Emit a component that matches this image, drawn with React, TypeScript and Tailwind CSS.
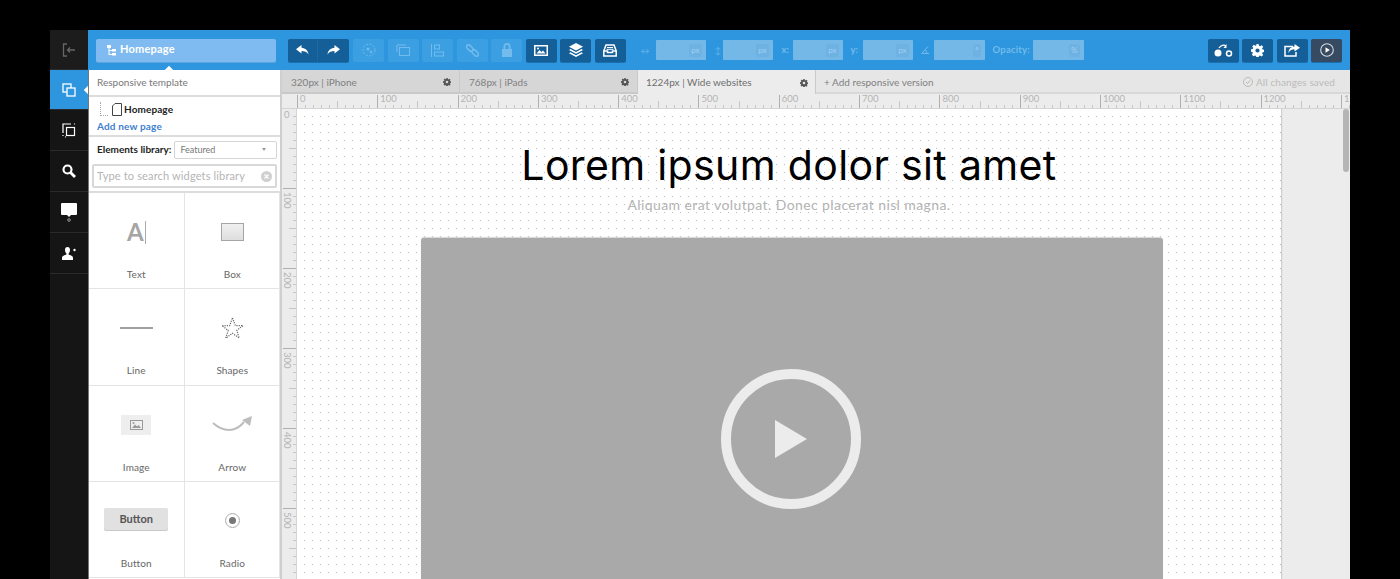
import { ReactNode } from "react";

const sans = "font-['Lato','Liberation_Sans',sans-serif]";

const hTicks = Array.from({ length: 134 }, (_, i) => i);
const hLabels = [0, 100, 200, 300, 400, 500, 600, 700, 800, 900, 1000, 1100, 1200, 1300];
const vTicks = Array.from({ length: 60 }, (_, i) => i);

function HorizontalRuler() {
  return (
    <svg width="1068" height="14" className="block">
      {hTicks.map((i) => {
        const x = 15.5 + Math.round(i * 8.03);
        const major = i % 10 === 0;
        const mid = i % 5 === 0;
        return <line key={i} x1={x} x2={x} y1={major ? 1 : mid ? 7 : 11} y2={14} stroke={major ? "#b0b0b0" : "#c6c6c6"} />;
      })}
      {hLabels.map((n, i) => (
        <text key={n} x={18 + i * 80.3} y={8} fontSize="9.5" fill="#b4b4b4" fontFamily="Lato">
          {n === 1300 ? "13" : n}
        </text>
      ))}
    </svg>
  );
}

function VerticalRuler() {
  return (
    <svg width="14" height="480" className="block">
      {vTicks.map((i) => {
        const y = i * 8 - 0.5;
        const major = i % 10 === 0;
        const mid = i % 5 === 0;
        return <line key={i} x1={major ? 1 : mid ? 7 : 11} x2={14} y1={y} y2={y} stroke={major ? "#b0b0b0" : "#c6c6c6"} />;
      })}
      <text x={2} y={9} fontSize="9.5" fill="#b4b4b4" fontFamily="Lato">0</text>
      {[100, 200, 300, 400, 500].map((n, i) => (
        <text key={n} transform={`translate(2 ${83 + i * 80}) rotate(90)`} fontSize="9.5" fill="#b4b4b4" fontFamily="Lato">
          {n}
        </text>
      ))}
    </svg>
  );
}

function Gear({ size = 8, color = "#555" }: { size?: number; color?: string }) {
  return (
    <svg width={size} height={size} viewBox="0 0 16 16">
      <path fill={color} fillRule="evenodd" d="M6.6 0h2.8l.4 2.2 1.3.6L13 1.5l2 2-1.300 1.900.6 1.300 2.200.4v2.800l-2.200.4-.6 1.300 1.300 1.900-2 2-1.900-1.300-1.300.6-.4 2.200H6.600l-.4-2.200-1.300-.6L3 15l-2-2 1.300-1.900-.6-1.300L0 9.400V6.600l2.200-.4.6-1.300L1.500 3l2-2 1.900 1.300 1.300-.6zM8 5.400a2.600 2.600 0 1 0 0 5.200 2.600 2.600 0 0 0 0-5.200z" />
    </svg>
  );
}

function ToolButton({ tone, children }: { tone: "dark" | "faint" | "slate"; children: ReactNode }) {
  const toneClass =
    tone === "dark"
      ? "bg-[#155f98] shadow-[0_1px_0_#1a6fae]"
      : tone === "slate"
        ? "bg-[#364a62] shadow-[0_1px_0_#1a6fae]"
        : "bg-[#3b9fe2]";
  return <div className={`flex h-[23px] w-[31px] items-center justify-center rounded-[2px] ${toneClass}`}>{children}</div>;
}

function SizeInput({ unit, width = "w-[50px]" }: { unit: string; width?: string }) {
  return (
    <div className={`flex h-[20px] ${width} items-center justify-end rounded-[1px] bg-[#74b8e8] pr-[4px]`}>
      <span className="flex h-[13px] min-w-[5px] items-center rounded-[2px] bg-[#6eb2e4] px-[2px] text-[8px] text-[#9fd0f2]">{unit}</span>
    </div>
  );
}

function RailItem({ active, children }: { active?: boolean; children: ReactNode }) {
  return (
    <div className={`relative flex items-center justify-center border-b border-[#2a2a2a] first:h-[40px] first:bg-[#1c1c1c] ${active ? "h-[40px] bg-[#2d96de]" : "h-[41px]"}`}>
      {children}
      {active && <div className="absolute right-[-3px] top-[17px] h-[6px] w-[6px] rotate-45 bg-white" />}
    </div>
  );
}

function WidgetCell({ label, children }: { label: string; children: ReactNode }) {
  return (
    <div className="flex h-[96.330px] flex-col items-center border-b border-r border-[#e4e4e4] even:pl-[1px]">
      <div className="flex h-[78px] w-full items-center justify-center">{children}</div>
      <span className="mt-[-3px] text-[10px] leading-[12px] tracking-[0.1px] text-[#666]">{label}</span>
    </div>
  );
}

const faintIcon = "#72bbec";

export default function App() {
  return (
    <div className={`h-screen overflow-hidden bg-black px-[50px] pt-[30px] ${sans}`}>
      <div className="flex h-full">
        {/* left rail */}
        <div className="w-[38px] shrink-0 bg-[#151515]">
          <RailItem>
            <svg width="14" height="14" viewBox="0 0 14 14" fill="none" stroke="#666" strokeWidth="1.300">
              <path d="M5 1H1.500v12H5" />
              <path d="M13 7H5.500M8 4.500 5.500 7 8 9.500" />
            </svg>
          </RailItem>
          <RailItem active>
            <svg width="14" height="14" viewBox="0 0 14 14" fill="none" stroke="#fff" strokeWidth="1.300">
              <rect x="1" y="1" width="8" height="8" />
              <rect x="5" y="5" width="8" height="8" fill="#2d96de" />
            </svg>
          </RailItem>
          <RailItem>
            <svg width="15" height="15" viewBox="0 0 15 15" fill="none" stroke="#fff" strokeWidth="1.200">
              <path d="M1 10V1h8" />
              <rect x="4.500" y="4.500" width="8" height="8" />
              <path d="M1 12v2M3 14h1M12 1h1" strokeDasharray="1 1" />
            </svg>
          </RailItem>
          <RailItem>
            <svg width="14" height="14" viewBox="0 0 14 14" fill="none" stroke="#fff" strokeWidth="2.200">
              <circle cx="5.500" cy="5.500" r="4" />
              <path d="M8.500 8.500 13 13" strokeWidth="2.800" />
            </svg>
          </RailItem>
          <RailItem>
            <svg width="16" height="19" viewBox="0 0 16 19">
              <path fill="#fff" d="M1 0h14a1 1 0 0 1 1 1v10a1 1 0 0 1-1 1h-5l-2 2-2-2H1a1 1 0 0 1-1-1V1a1 1 0 0 1 1-1z" />
              <circle cx="8" cy="17" r="1.300" fill="none" stroke="#999" />
            </svg>
          </RailItem>
          <RailItem>
            <svg width="14" height="13" viewBox="0 0 14 13">
              <path fill="#fff" d="M5.500 0C3.800 0 3 1.300 3 3c0 1.500.6 2.800 1.400 3.400v1.200C2.500 8.300 0 9 0 10.500V13h11v-2.500C11 9 8.500 8.300 6.600 7.600V6.400C7.400 5.800 8 4.500 8 3c0-1.700-.8-3-2.500-3z" />
              <circle cx="12.500" cy="3" r="1.200" fill="#fff" />
            </svg>
          </RailItem>
        </div>

        <div className="flex min-w-0 flex-1 flex-col">
          {/* toolbar */}
          <div className="flex h-[40px] shrink-0 items-center bg-[#2d96de] pl-[8px] pr-[8px]">
            <div className="flex h-[23px] w-[180px] items-center gap-[4px] rounded-[2px] bg-[#7fbbf0] pl-[11px] shadow-[0_1px_0_#5aa5dd]">
              <svg width="9" height="11" viewBox="0 0 9 11" fill="#fff">
                <rect x="0" y="0" width="4" height="3" />
                <rect x="5" y="4" width="4" height="2.500" />
                <rect x="5" y="8" width="4" height="2.500" />
                <path d="M1.500 3h1v6H5v1H1.500zM2.500 5H5v1H2.500z" />
              </svg>
              <span className="pb-[2px] text-[11px] font-bold tracking-[0.2px] text-white">Homepage</span>
            </div>

            <div className="ml-[12px] flex h-[23px] w-[61px] rounded-[2px] bg-[#155f98] shadow-[0_1px_0_#1a6fae]">
              <div className="flex w-[30px] items-center justify-center border-r border-[#1a6aa8]">
                <svg width="13" height="10" viewBox="0 0 13 10" fill="#fff">
                  <path d="M5.500 0 0 4.300l5.500 4.300V6c3 0 5.500.8 7 3.500C12 5.500 9.500 3 5.500 2.700z" />
                </svg>
              </div>
              <div className="flex flex-1 items-center justify-center">
                <svg width="13" height="10" viewBox="0 0 13 10" fill="#fff">
                  <path d="M7.500 0 13 4.300 7.500 8.600V6c-3 0-5.500.8-7 3.500C1 5.500 3.500 3 7.500 2.700z" />
                </svg>
              </div>
            </div>

            <div className="ml-[4px] flex gap-[3.500px]">
              <ToolButton tone="faint">
                <svg width="14" height="14" viewBox="0 0 14 14" fill="none" stroke={faintIcon}>
                  <circle cx="7" cy="7" r="6" strokeDasharray="2 1.500" />
                  <circle cx="6" cy="6" r="1.500" fill={faintIcon} stroke="none" />
                  <circle cx="9" cy="9" r="1.200" fill={faintIcon} stroke="none" />
                </svg>
              </ToolButton>
              <ToolButton tone="faint">
                <svg width="14" height="12" viewBox="0 0 14 12" fill="none" stroke={faintIcon}>
                  <path d="M1 8V1h9" />
                  <rect x="3.500" y="3.500" width="10" height="8" />
                </svg>
              </ToolButton>
              <ToolButton tone="faint">
                <svg width="13" height="13" viewBox="0 0 13 13" fill="none" stroke={faintIcon}>
                  <path d="M.500 0v13" />
                  <rect x="3.500" y="1" width="5" height="4" />
                  <rect x="3.500" y="8" width="9" height="4" />
                </svg>
              </ToolButton>
              <ToolButton tone="faint">
                <svg width="13" height="13" viewBox="0 0 13 13" fill="none" stroke={faintIcon} strokeWidth="1.500">
                  <rect x="0" y="2" width="7.500" height="4" rx="2" transform="rotate(45 3.750 4)" />
                  <rect x="5.500" y="7" width="7.500" height="4" rx="2" transform="rotate(45 9.250 9)" />
                </svg>
              </ToolButton>
              <ToolButton tone="faint">
                <svg width="12" height="14" viewBox="0 0 12 14" fill={faintIcon}>
                  <path fillRule="evenodd" d="M6 0a3.500 3.500 0 0 1 3.500 3.500V6H11v8H1V6h1.500V3.500A3.500 3.500 0 0 1 6 0zm0 1.800A1.700 1.700 0 0 0 4.300 3.500V6h3.400V3.500A1.700 1.700 0 0 0 6 1.800z" />
                </svg>
              </ToolButton>
              <ToolButton tone="dark">
                <svg width="14" height="11" viewBox="0 0 14 11">
                  <rect x="0.750" y="0.750" width="12.500" height="9.500" fill="none" stroke="#fff" strokeWidth="1.500" />
                  <path fill="#fff" d="M2.500 8.500 5.500 5l2 2 1.500-1.500 2.500 3z" />
                  <circle cx="4" cy="3.500" r="1" fill="#fff" />
                </svg>
              </ToolButton>
              <ToolButton tone="dark">
                <svg width="14" height="14" viewBox="0 0 14 14" fill="#fff">
                  <path d="M7 0l7 3.800L7 7.600 0 3.800z" />
                  <path d="M1.500 6 7 9l5.500-3L14 7l-7 3.800L0 7z" />
                  <path d="M1.500 9.200 7 12.200l5.500-3L14 10.200 7 14 0 10.200z" />
                </svg>
              </ToolButton>
              <ToolButton tone="dark">
                <svg width="14" height="13" viewBox="0 0 14 13" fill="none" stroke="#fff" strokeWidth="1.500">
                  <path d="M3 1h8l2.200 6v5H.800V7z" />
                  <path d="M1 7h3.500v1.500h5V7H13" />
                  <path d="M4 3.500h6M3.500 5.300h7" strokeWidth="1" />
                </svg>
              </ToolButton>
            </div>

            <span className="ml-[15px] w-[15px] text-[9px] leading-none text-[#64b2ea]">↔</span>
            <SizeInput unit="px" />
            <span className="ml-[9px] w-[8px] text-[9px] leading-none text-[#64b2ea]">↕</span>
            <SizeInput unit="px" />
            <span className="ml-[9px] w-[11px] text-[9.500px] font-bold text-[#72bbec]">x:</span>
            <SizeInput unit="px" />
            <span className="ml-[8px] w-[12px] text-[9.500px] font-bold text-[#72bbec]">y:</span>
            <SizeInput unit="px" />
            <svg className="ml-[8px] mr-[5px]" width="8" height="8" viewBox="0 0 8 8" fill="none" stroke="#72bbec">
              <path d="M7 .500 .700 7.500H8M4.500 3.500 6 7" />
            </svg>
            <SizeInput unit="°" width="w-[51px]" />
            <span className="ml-[8px] w-[40px] text-[9.500px] font-bold tracking-[0.2px] text-[#72bbec]">Opacity:</span>
            <SizeInput unit="%" width="w-[51px]" />

            <div className="ml-auto flex gap-[3.500px]">
              <ToolButton tone="dark">
                <svg width="19" height="13" viewBox="0 0 19 13" fill="none">
                  <circle cx="4" cy="9" r="3.500" fill="#fff" />
                  <circle cx="15" cy="9.500" r="2.500" stroke="#fff" strokeWidth="1.500" />
                  <path d="M5 4c2-3 5-3.500 7-2" stroke="#fff" strokeWidth="1.300" />
                  <path d="M12.500 0v4H9.500z" fill="#fff" />
                </svg>
              </ToolButton>
              <ToolButton tone="dark">
                <Gear size={13} color="#fff" />
              </ToolButton>
              <ToolButton tone="dark">
                <svg width="16" height="13" viewBox="0 0 16 13" fill="none">
                  <path d="M9 2.500H1v9.500h11V8" stroke="#fff" strokeWidth="1.500" />
                  <path fill="#fff" d="M10.500 0 16 3.800l-5.500 3.800V5.300C8 5.300 6 6 4.500 9c0-4 2.500-6.200 6-6.500z" />
                </svg>
              </ToolButton>
              <ToolButton tone="slate">
                <svg width="14" height="14" viewBox="0 0 14 14">
                  <circle cx="7" cy="7" r="6.300" fill="none" stroke="#d7dde4" strokeWidth="1.100" />
                  <path fill="#fff" d="M5.500 4.300 9.800 7l-4.300 2.700z" />
                </svg>
              </ToolButton>
            </div>
          </div>

          <div className="flex min-h-0 flex-1">
            {/* sidebar */}
            <div className="relative w-[194px] shrink-0 border-l border-r-2 border-l-[#777] border-r-[#cfcfcf] bg-white">
              <div className="absolute left-[77px] top-[-3px] h-[6px] w-[6px] rotate-45 bg-white" />
              <div className="flex h-[27px] items-center border-b-2 border-[#dcdcdc] pl-[8px] text-[10px] text-[#777]">
                Responsive template
              </div>
              <div className="relative h-[40px] border-b-2 border-[#dcdcdc] pl-[8px]">
                <div className="flex h-[24px] items-center pl-[3px]">
                  <div className="mr-[4px] h-[14px] w-[8px] border-b border-l border-dotted border-[#aaa]" />
                  <svg width="10" height="13" viewBox="0 0 10 13" fill="none" stroke="#444">
                    <path d="M3 .500h6.500v12H.500V3z" />
                  </svg>
                  <span className="ml-[2px] text-[10px] font-bold tracking-[0.1px] text-[#222]">Homepage</span>
                </div>
                <div className="mt-[-1px] text-[10px] font-bold leading-[12px] tracking-[0.15px] text-[#3f7fd0]">Add new page</div>
              </div>
              <div className="flex h-[27px] items-center pb-[2px] pl-[8px]">
                <span className="shrink-0 whitespace-nowrap text-[10px] font-bold text-[#222]">Elements library:</span>
                <div className="ml-[3px] flex h-[18px] w-[103px] shrink-0 items-center justify-between rounded-[2px] border border-[#d5d5d5] pl-[5px] pr-[10px] text-[9px] text-[#777]">
                  Featured
                  <span className="h-0 w-0 border-x-[2.500px] border-t-[3px] border-x-transparent border-t-[#999]" />
                </div>
              </div>
              <div className="border-b-2 border-[#dcdcdc] px-[3px] pb-[3px]">
                <div className="flex h-[24px] items-center justify-between rounded-[2px] border-2 border-[#d8d8d8] pl-[3px] pr-[3px] text-[11px] tracking-[0.15px] text-[#b4b4b4]">
                  Type to search widgets library
                  <span className="flex h-[11px] w-[11px] items-center justify-center rounded-full bg-[#cfcfcf]">
                    <svg width="5" height="5" viewBox="0 0 5 5" stroke="#fff" strokeWidth="1.200"><path d="M.500.500l4 4M4.500.500l-4 4" /></svg>
                  </span>
                </div>
              </div>
              <div className="grid grid-cols-2">
                <WidgetCell label="Text">
                  <div className="flex items-center">
                    <span className="text-[24px] font-bold leading-none text-[#a5a5a5]">A</span>
                    <span className="ml-[1px] h-[23px] w-px bg-[#aaa]" />
                  </div>
                </WidgetCell>
                <WidgetCell label="Box">
                  <div className="h-[18px] w-[23px] border border-[#a5a5a5] bg-gradient-to-b from-[#f0f0f0] to-[#dedede]" />
                </WidgetCell>
                <WidgetCell label="Line">
                  <div className="h-[2px] w-[33px] bg-[#a0a0a0]" />
                </WidgetCell>
                <WidgetCell label="Shapes">
                  <svg width="23" height="23" viewBox="0 0 24 24" fill="none" stroke="#666" strokeWidth="1.300" strokeDasharray="1.200 1.200">
                    <path d="M12 1l3 8h8l-6.500 5 2.500 8-7-5-7 5 2.500-8L1 9h8z" />
                  </svg>
                </WidgetCell>
                <WidgetCell label="Image">
                  <div className="flex h-[20px] w-[30px] items-center justify-center bg-[#eee]">
                    <svg width="13" height="10" viewBox="0 0 13 10">
                      <rect x=".500" y=".500" width="12" height="9" fill="none" stroke="#999" />
                      <path fill="#999" d="M2 8l3-3.500 2 2 1.500-1.500L11 8z" />
                      <circle cx="3.500" cy="3" r="1" fill="#999" />
                    </svg>
                  </div>
                </WidgetCell>
                <WidgetCell label="Arrow">
                  <svg width="41" height="20" viewBox="0 0 41 20" fill="none">
                    <path d="M1 8c10 9 22 10 31-1" stroke="#bdbdbd" strokeWidth="2" />
                    <path fill="#bdbdbd" d="M40 1l-2 10-8-6z" />
                  </svg>
                </WidgetCell>
                <WidgetCell label="Button">
                  <div className="mb-[3px] flex h-[22px] w-[64px] items-center justify-center rounded-[2px] bg-[#e1e1e1] text-[11px] font-bold text-[#555] shadow-[0_1px_0_#c8c8c8]">
                    Button
                  </div>
                </WidgetCell>
                <WidgetCell label="Radio">
                  <div className="flex h-[15px] w-[15px] items-center justify-center rounded-full border border-[#aaa]">
                    <div className="h-[7px] w-[7px] rounded-full bg-[#777]" />
                  </div>
                </WidgetCell>
              </div>
            </div>

            {/* workspace */}
            <div className="flex min-w-0 flex-1 flex-col">
              <div className="flex h-[24px] shrink-0 text-[10px] text-[#808080]">
                <div className="flex w-[178px] items-center justify-between border-b-2 border-r border-[#c9c9c9] bg-[#d6d6d6] pl-[9px] pr-[8px] pt-[2px]">
                  <span>320px |&nbsp;iPhone</span> <Gear />
                </div>
                <div className="flex w-[178px] items-center justify-between border-b-2 border-r border-[#c9c9c9] bg-[#d6d6d6] pl-[9px] pr-[8px] pt-[2px]">
                  <span>768px |&nbsp;iPads</span> <Gear />
                </div>
                <div className="flex w-[178px] items-center justify-between border-r border-[#c9c9c9] bg-[#ececec] pl-[8px] pr-[7px] pt-[1px] text-[#6e6e6e]">
                  <span>1224px |&nbsp;Wide websites</span> <Gear />
                </div>
                <div className="flex flex-1 items-center justify-between border-b-2 border-[#d8d8d8] bg-[#e6e6e6] pl-[8px] pr-[15px] pt-[2px]">
                  + Add responsive version
                  <span className="flex items-center gap-[3px] tracking-[0.1px] text-[#bbb]">
                    <svg width="10" height="10" viewBox="0 0 10 10" fill="none" stroke="#bbb">
                      <circle cx="5" cy="5" r="4.500" />
                      <path d="M3 5l1.500 1.500L7 3.500" />
                    </svg>
                    All changes saved
                  </span>
                </div>
              </div>
              <div className="h-[15px] shrink-0 border-b border-[#d4d4d4] bg-[#ececec]">
                <HorizontalRuler />
              </div>
              <div className="relative flex min-h-0 flex-1 overflow-hidden bg-[#ececec]">
                <div className="w-[15px] shrink-0 border-r border-[#d4d4d4]">
                  <VerticalRuler />
                </div>
                <div className="w-[984px] shrink-0 bg-white bg-[radial-gradient(circle_at_0.5px_0.5px,#bdbdbd_0.6px,transparent_0.7px)] bg-[size:8px_8px] bg-[position:7px_7px] shadow-[1px_0_1px_#cfcfcf]">
                  <h1 className="mt-[32px] text-center font-['Inter',sans-serif] text-[41px] font-normal leading-[48px] tracking-[0.35px] text-black">
                    Lorem ipsum dolor sit amet
                  </h1>
                  <p className="mt-[6px] text-center text-[14px] leading-[20px] tracking-[0.4px] text-[#b3b3b3]">
                    Aliquam erat volutpat. Donec placerat nisl magna.
                  </p>
                  <div className="ml-[124px] mt-[23px] flex h-[402px] w-[742px] items-center justify-center rounded-[3px] bg-[#a9a9a9] pr-[2px] shadow-[0_-1px_1px_#d5d5d5]">
                    <svg width="140" height="140" viewBox="0 0 140 140">
                      <circle cx="70" cy="70" r="65" fill="none" stroke="#ececec" strokeWidth="10" />
                      <path fill="#ececec" d="M54 51l32 19-32 19z" />
                    </svg>
                  </div>
                </div>
                <div className="absolute right-[1px] top-0 h-[63px] w-[6px] rounded-[3px] bg-[#b5b5b5]" />
              </div>
            </div>
          </div>
        </div>
      </div>
    </div>
  );
}
